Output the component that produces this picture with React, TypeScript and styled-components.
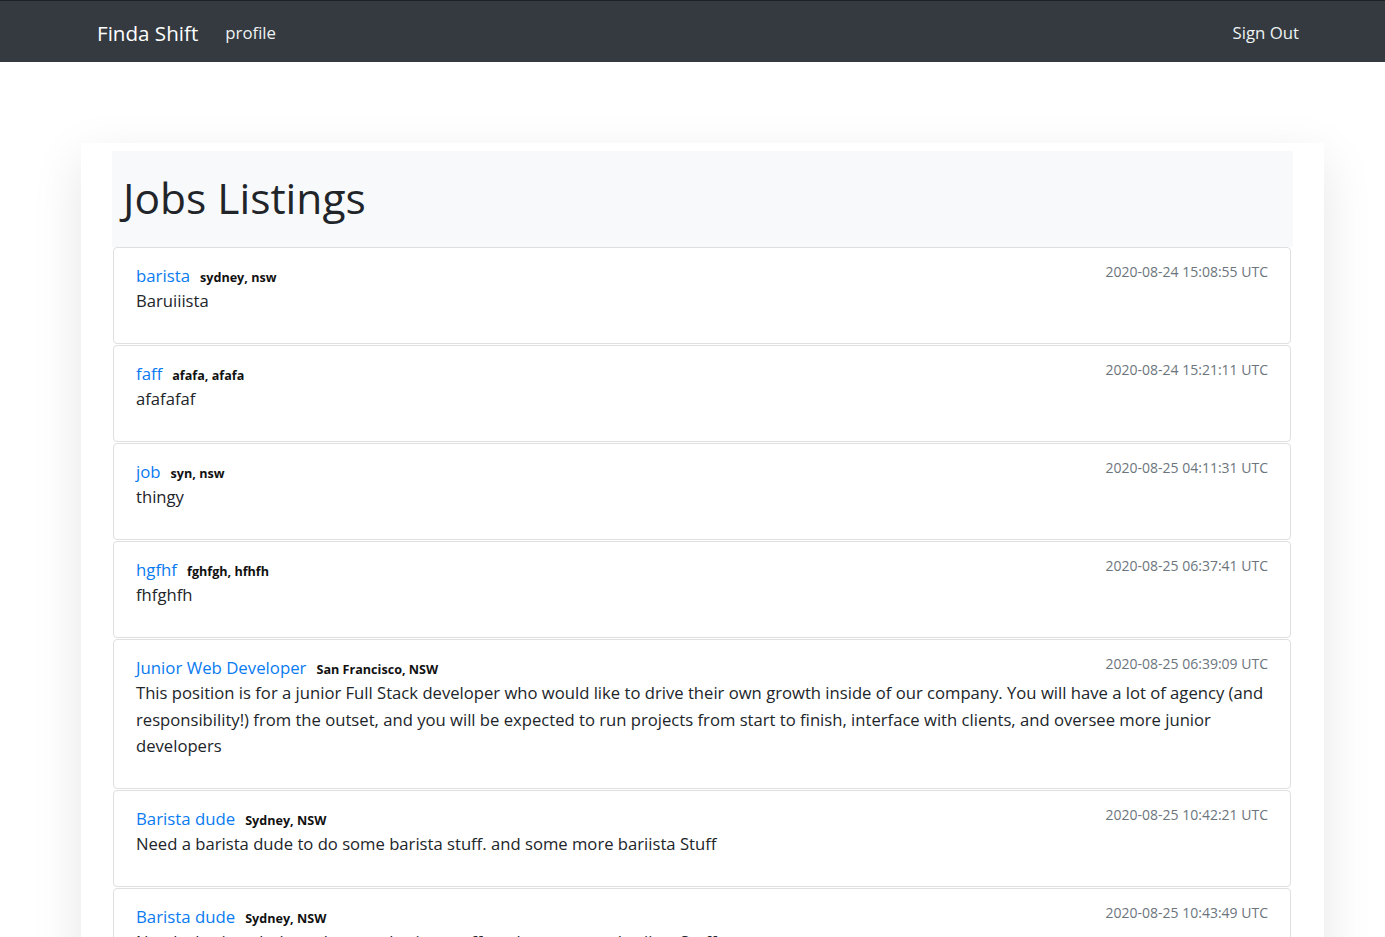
import React from "react";
import styled, { createGlobalStyle } from "styled-components";

const GlobalStyle = createGlobalStyle`
  html, body { margin: 0; padding: 0; background: #fff; }
  body {
    font-family: "Open Sans", "Noto Sans", "Liberation Sans", sans-serif;
    color: #212529;
    -webkit-font-smoothing: antialiased;
  }
  * { box-sizing: border-box; }
`;

const Navbar = styled.nav`
  height: 62px;
  background: #343a40;
  border-top: 1px solid #1d2126;
  display: flex;
  align-items: center;
  padding: 2px 86px 0 97px;
`;

const Brand = styled.a`
  font-size: 20.6px;
  color: #fff;
  text-decoration: none;
  margin-right: 27px;
`;

const NavLink = styled.a<{ $push?: boolean }>`
  font-size: 16.8px;
  color: #eef2f3;
  text-decoration: none;
  margin-left: ${(p) => (p.$push ? "auto" : "0")};
`;

const Main = styled.main`
  padding: 81px 61px 0 81px;
`;

const Card = styled.section`
  background: #fff;
  box-shadow: 0 16px 48px rgba(0, 0, 0, 0.1);
  padding: 8px 31px 0 31px;
`;

const Header = styled.header`
  background: #f8f9fa;
  height: 96px;
  padding: 0 11px;
  display: flex;
  align-items: center;
`;

const Title = styled.h1`
  margin: -4px 0 0;
  font-size: 42.5px;
  font-weight: 400;
  line-height: 1.2;
`;

const List = styled.ul`
  list-style: none;
  margin: 0 2px 0 1px;
  padding: 0;
`;

const Item = styled.li`
  border: 1px solid #dfdfdf;
  border-radius: 4px;
  margin-bottom: 1px;
  padding: 14px 22px 12.5px;
`;

const ItemHead = styled.div`
  display: flex;
  justify-content: space-between;
  align-items: flex-start;
  height: 26px;
`;

const TitleGroup = styled.div`
  display: flex;
  align-items: baseline;
  gap: 10px;
`;

const JobTitle = styled.span`
  font-size: 16.8px;
  line-height: 28px;
  color: #0a7bf0;
`;

const Location = styled.span`
  font-size: 12.6px;
  font-weight: 700;
  color: #111;
`;

const Date = styled.small`
  font-size: 14px;
  line-height: 20px;
  margin-top: 0px;
  color: #6c757d;
`;

const Body = styled.p`
  margin: 0 0 16px;
  font-size: 16.65px;
  line-height: 26.5px;
`;

const jobs = [
  { title: "barista", loc: "sydney, nsw", date: "2020-08-24 15:08:55 UTC", body: "Baruiiista" },
  { title: "faff", loc: "afafa, afafa", date: "2020-08-24 15:21:11 UTC", body: "afafafaf" },
  { title: "job", loc: "syn, nsw", date: "2020-08-25 04:11:31 UTC", body: "thingy" },
  { title: "hgfhf", loc: "fghfgh, hfhfh", date: "2020-08-25 06:37:41 UTC", body: "fhfghfh" },
  {
    title: "Junior Web Developer",
    loc: "San Francisco, NSW",
    date: "2020-08-25 06:39:09 UTC",
    body:
      "This position is for a junior Full Stack developer who would like to drive their own growth inside of our company. You will have a lot of agency (and responsibility!) from the outset, and you will be expected to run projects from start to finish, interface with clients, and oversee more junior developers",
  },
  {
    title: "Barista dude",
    loc: "Sydney, NSW",
    date: "2020-08-25 10:42:21 UTC",
    body: "Need a barista dude to do some barista stuff. and some more bariista Stuff",
  },
  {
    title: "Barista dude",
    loc: "Sydney, NSW",
    date: "2020-08-25 10:43:49 UTC",
    body: "Need a barista dude to do some barista stuff. and some more bariista Stuff",
  },
];

export default function App() {
  return (
    <>
      <GlobalStyle />
      <Navbar>
        <Brand href="#">Finda Shift</Brand>
        <NavLink href="#">profile</NavLink>
        <NavLink href="#" $push>
          Sign Out
        </NavLink>
      </Navbar>
      <Main>
        <Card>
          <Header>
            <Title>Jobs Listings</Title>
          </Header>
          <List>
            {jobs.map((j, i) => (
              <Item key={i}>
                <ItemHead>
                  <TitleGroup>
                    <JobTitle>{j.title}</JobTitle>
                    <Location>{j.loc}</Location>
                  </TitleGroup>
                  <Date>{j.date}</Date>
                </ItemHead>
                <Body>{j.body}</Body>
              </Item>
            ))}
          </List>
        </Card>
      </Main>
    </>
  );
}
